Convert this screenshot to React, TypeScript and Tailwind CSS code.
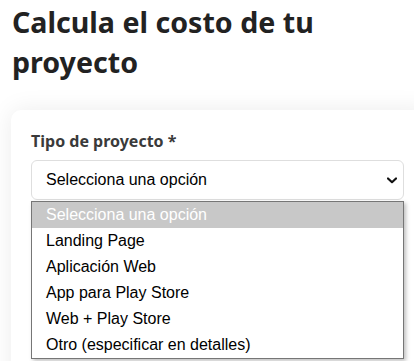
import { useState } from "react";

const options = [
    "Selecciona una opción",
    "Landing Page",
    "Aplicación Web",
    "App para Play Store",
    "Web + Play Store",
    "Otro (especificar en detalles)",
];

const extras = [
    "Diseño personalizado",
    "Panel de administración",
    "Inicio de sesión de usuarios",
    "Pasarela de pagos",
    "Dominio y hosting por un año",
];

const App = () => {
    const [selected] = useState(0);

    return (
        <div className="w-[414px] h-[361px] overflow-hidden bg-white font-['Noto_Sans',sans-serif]">
            <h1 className="px-3 pt-[2px] text-[28.6px] leading-10 font-bold text-[#222222]">Calcula el costo de tu proyecto</h1>
            <div className="pl-[11px] pt-7">
                <div className="w-[420px] rounded-[10px] bg-white pl-5 pt-5 pb-10 shadow-[0_0_24px_rgba(0,0,0,0.08)]">
                    <label className="block text-[16px] leading-[22px] font-bold text-[#3a3a3a]">Tipo de proyecto *</label>
                    <div className="relative mt-2 w-[373px]">
                        <div className="flex h-10 items-center justify-between rounded-[6px] border border-[#dedede] bg-white pl-[14px] pr-[5px] font-['Liberation_Sans',Arial,sans-serif] text-base text-black">
                            <span>{options[selected]}</span>
                            <svg width="10" height="7" viewBox="0 0 10 7" className="mr-[1px]">
                                <path d="M1 1.5 L5 5.2 L9 1.5" fill="none" stroke="#111" strokeWidth="2.2" strokeLinecap="round" strokeLinejoin="round" />
                            </svg>
                        </div>
                        <div className="absolute left-0 top-[41px] z-10 w-[373px] border border-[#767676] bg-white font-['Liberation_Sans',Arial,sans-serif] text-base shadow-[2px_2px_4px_rgba(0,0,0,0.25)]">
                            {options.map((opt, i) => (
                                <div
                                    key={opt}
                                    className={
                                        i === selected
                                            ? "h-[26px] leading-[26px] pl-[14px] bg-[#c8c8c8] text-white"
                                            : "h-[26px] leading-[26px] pl-[14px] text-black"
                                    }
                                >
                                    {opt}
                                </div>
                            ))}
                        </div>
                    </div>
                    <label className="mt-6 block text-[15px] leading-[22px] font-bold text-[#3a3a3a]">Funcionalidades adicionales</label>
                    <div className="mt-2 flex flex-col">
                        {extras.map((item) => (
                            <div key={item} className="flex h-[26px] items-center gap-[9px] pl-[17px]">
                                <span className="h-[13px] w-[13px] rounded-[2px] border border-[#555555] bg-white" />
                                <span className="text-[17px] text-[#222222]">{item}</span>
                            </div>
                        ))}
                    </div>
                </div>
            </div>
        </div>
    );
};

export default App;
